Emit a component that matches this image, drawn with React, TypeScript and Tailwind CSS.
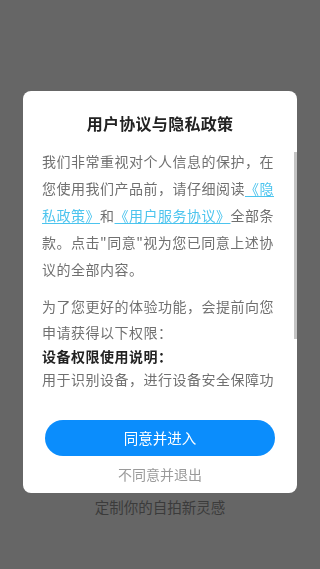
import React from 'react';

const font = { fontFamily: '"Noto Sans CJK SC", "Noto Sans", sans-serif' };

export default function App() {
  return (
    <div className="relative min-h-screen bg-[#666666]" style={font}>
      {/* Page behind the dialog */}
      <div className="flex min-h-screen flex-col justify-end pb-[52px]">
        <p className="text-center text-[14.5px] leading-[20px] text-[#3b3b3b]">定制你的自拍新灵感</p>
      </div>

      {/* Privacy dialog */}
      <div className="fixed inset-0 px-[23px] pt-[91px]">
        <div className="relative rounded-[8px] bg-white pb-[9px] pt-[20px]">
          <h1 className="text-center text-[16px] font-bold leading-[24px] tracking-[0.3px] text-[#222222]">
            用户协议与隐私政策
          </h1>

          <div className="mt-[13px] h-[250px] overflow-hidden px-[19px] text-[14px] tracking-[0.5px] text-[#707070]">
            <div className="whitespace-nowrap leading-[27px]">
              <div>我们非常重视对个人信息的保护，在</div>
              <div>
                您使用我们产品前，请仔细阅读<span className="text-[#4cc4ee] underline underline-offset-2">《隐</span>
              </div>
              <div>
                <span className="text-[#4cc4ee] underline underline-offset-2">私政策》</span>和
                <span className="text-[#4cc4ee] underline underline-offset-2">《用户服务协议》</span>全部条
              </div>
              <div>款。点击"同意"视为您已同意上述协</div>
              <div>议的全部内容。</div>
            </div>

            <div className="mt-[10px] whitespace-nowrap">
              <div className="leading-[26px]">为了您更好的体验功能，会提前向您</div>
              <div className="leading-[26px]">申请获得以下权限：</div>
              <div className="font-bold leading-[22px] text-[#222222]">设备权限使用说明：</div>
              <div className="leading-[24px]">用于识别设备，进行设备安全保障功</div>
            </div>
          </div>

          {/* scroll thumb */}
          <div className="absolute right-0 top-[61px] h-[187px] w-[3px] bg-[#c4c4c4]" />

          <div className="mt-[22px] px-[22px]">
            <button className="flex h-[36px] w-full items-center justify-center rounded-full bg-[#0b8dfc] text-[14.5px] text-white">
              同意并进入
            </button>
          </div>
          <p className="mt-[8px] text-center text-[14px] leading-[20px] text-[#9a9a9a]">不同意并退出</p>
        </div>
      </div>
    </div>
  );
}
